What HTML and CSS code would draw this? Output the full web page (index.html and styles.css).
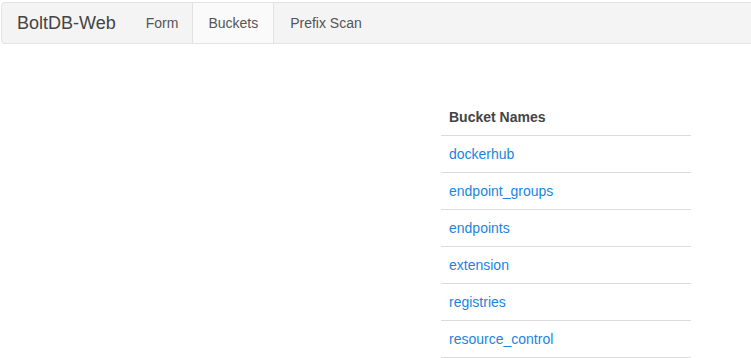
FILE: index.html
```html
<!DOCTYPE html>
<html lang="en">
<head>
    <meta charset="UTF-8">
    <meta name="viewport" content="width=device-width, initial-scale=1.0">
    <title>BoltDB-Web</title>
    <link rel="stylesheet" href="styles.css">
</head>
<body>

    <nav class="navbar">
        <a class="brand" href="#">BoltDB-Web</a>
        <ul class="nav">
            <li class="first"><a href="#">Form</a></li>
            <li class="active"><a href="#">Buckets</a></li>
            <li><a href="#">Prefix Scan</a></li>
        </ul>
    </nav>

    <div class="content">
        <table class="buckets">
            <thead>
                <tr><th>Bucket Names</th></tr>
            </thead>
            <tbody>
                <tr><td><a href="#">dockerhub</a></td></tr>
                <tr><td><a href="#">endpoint_groups</a></td></tr>
                <tr><td><a href="#">endpoints</a></td></tr>
                <tr><td><a href="#">extension</a></td></tr>
                <tr><td><a href="#">registries</a></td></tr>
                <tr><td><a href="#">resource_control</a></td></tr>
            </tbody>
        </table>
    </div>

</body>
</html>
```

FILE: styles.css
```css
body {
    margin: 0;
    font-family: "Liberation Sans", Arial, sans-serif;
    font-size: 14px;
    line-height: 20px;
    color: #333;
    background: #fff;
    overflow: hidden;
}
.navbar {
    display: flex;
    align-items: stretch;
    margin: 2px -10px 0 1px;
    background: #f4f4f4;
    border: 1px solid #e3e3e3;
    border-radius: 4px;
}
.brand {
    padding: 10px 15px;
    font-size: 18px;
    color: #444;
    text-decoration: none;
}
.nav {
    display: flex;
    list-style: none;
    margin: 0 0 0 -1px;
    padding: 0;
}
.nav li a {
    display: block;
    padding: 10px 15px;
    color: #555;
    text-decoration: none;
    border-left: 1px solid transparent;
    border-right: 1px solid transparent;
}
.nav li.first a {
    padding-right: 13px;
}
.nav li.active a {
    background: #fafafa;
    border-color: #e3e3e3;
}
.content {
    padding: 55px 0 0 441px;
}
.buckets {
    width: 250px;
    border-collapse: collapse;
}
.buckets th,
.buckets td {
    padding: 8px;
    text-align: left;
    border-bottom: 1px solid #dcdcdc;
}
.buckets th {
    color: #444;
    font-weight: bold;
}
.buckets a {
    color: #1a85e0;
    text-decoration: none;
}
```
